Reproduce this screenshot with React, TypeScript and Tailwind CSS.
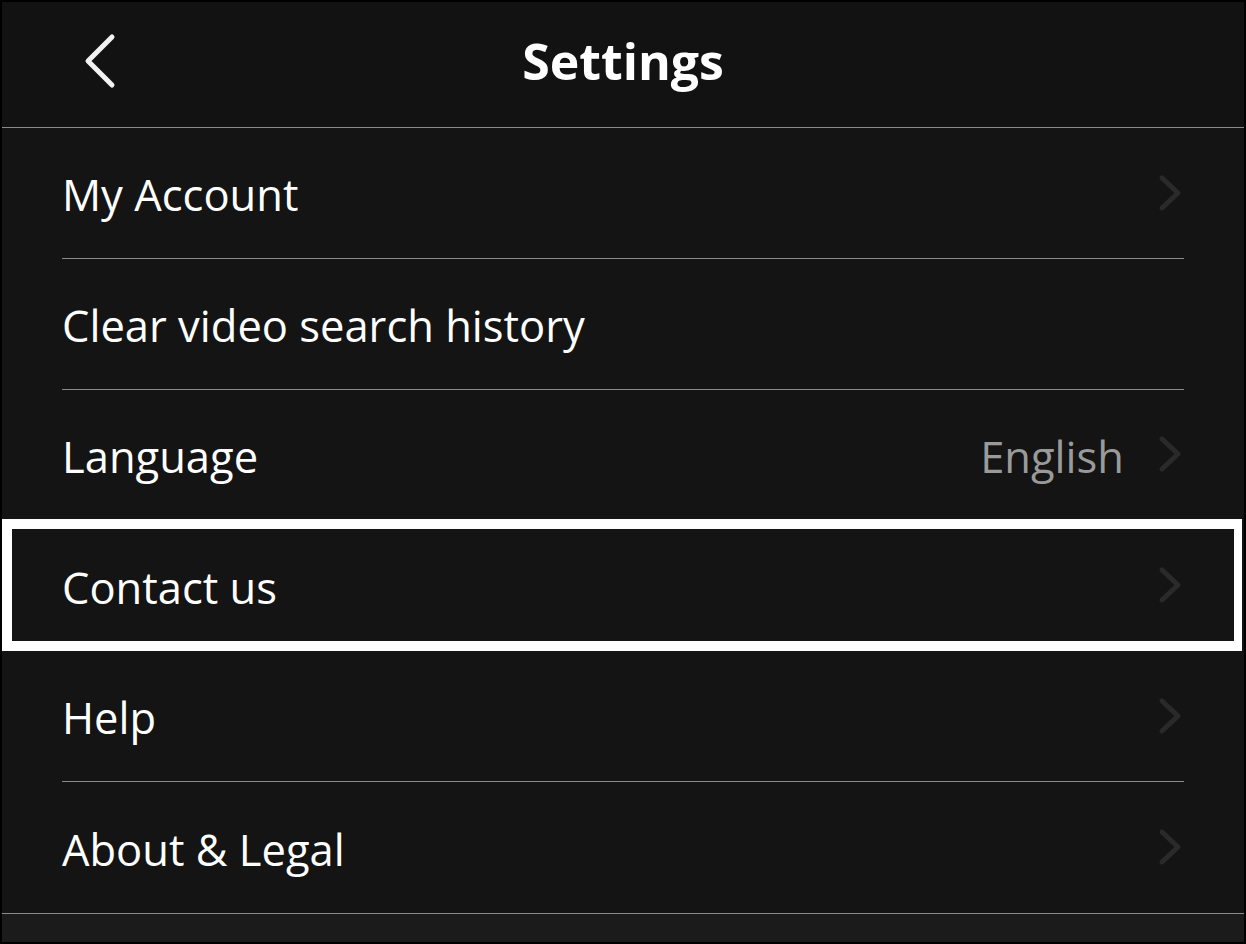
import React from "react";

const Chevron = () => (
  <svg width="26" height="40" viewBox="0 0 26 40" className="shrink-0">
    <polyline
      points="4,5 20,20 4,35"
      fill="none"
      stroke="#2a2a2a"
      strokeWidth="5"
      strokeLinecap="round"
      strokeLinejoin="round"
    />
  </svg>
);

type Row = { label: string; value?: string; chevron: boolean; highlight?: boolean };

const rows: Row[] = [
  { label: "My Account", chevron: true },
  { label: "Clear video search history", chevron: false },
  { label: "Language", value: "English", chevron: true },
  { label: "Contact us", chevron: true, highlight: true },
  { label: "Help", chevron: true },
  { label: "About & Legal", chevron: true },
];

export default function App() {
  return (
    <div
      className="w-[1246px] h-[944px] bg-black p-[2px]"
      style={{ fontFamily: '"Open Sans", "Noto Sans", sans-serif' }}
    >
      <div className="flex flex-col h-full bg-[#141414]">
        <div className="relative h-[126px] shrink-0 bg-[#121212] border-b border-[#8a8a8a] flex items-center justify-center pb-[8px]">
          <svg
            width="40"
            height="64"
            viewBox="0 0 40 64"
            className="absolute left-[76px] top-[25px]"
          >
            <polyline
              points="34,10 10,34 34,58"
              fill="none"
              stroke="#f2f2f2"
              strokeWidth="5"
              strokeLinecap="round"
              strokeLinejoin="round"
            />
          </svg>
          <span className="text-white font-bold text-[50px] leading-none">Settings</span>
        </div>
        {rows.map((r, i) => (
          <div key={i} className="relative h-[130.8px] shrink-0">
            <div
              className={
                i < rows.length - 1
                  ? "mx-[60px] h-full border-b border-[#8a8a8a] flex items-center"
                  : "mx-[60px] h-full flex items-center"
              }
            >
              <span className="text-white text-[43.5px] leading-none flex-1 pt-[4px]">{r.label}</span>
              {r.value && (
                <span className="text-[#9a9a9a] text-[43.5px] leading-none mr-[34px] pt-[4px]">{r.value}</span>
              )}
              {r.chevron && <Chevron />}
            </div>
            {r.highlight && (
              <div className="absolute left-0 right-[2px] -top-[1px] bottom-0 border-white border-t-[10px] border-l-[10px] border-b-[10px] border-r-[8px] pointer-events-none" />
            )}
          </div>
        ))}
        <div className="flex-1 bg-[#1b1b1b] border-t border-[#8a8a8a]" />
      </div>
    </div>
  );
}
